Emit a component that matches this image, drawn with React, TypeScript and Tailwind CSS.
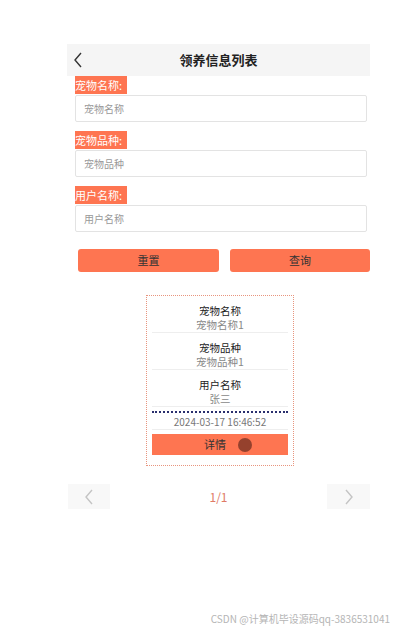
import React from "react";

type Field = {
  label: string;
  placeholder: string;
};

type Row = {
  title: string;
  value: string;
};

const fields: Field[] = [
  { label: "宠物名称:", placeholder: "宠物名称" },
  { label: "宠物品种:", placeholder: "宠物品种" },
  { label: "用户名称:", placeholder: "用户名称" },
];

const rows: Row[] = [
  { title: "宠物名称", value: "宠物名称1" },
  { title: "宠物品种", value: "宠物品种1" },
  { title: "用户名称", value: "张三" },
];

const Chevron = ({ dir, className }: { dir: "left" | "right"; className?: string }) => (
  <svg
    width="10"
    height="16"
    viewBox="0 0 10 16"
    fill="none"
    stroke="currentColor"
    strokeWidth="1.4"
    className={className}
  >
    {dir === "left" ? <path d="M8 1 L2 8 L8 15" /> : <path d="M2 1 L8 8 L2 15" />}
  </svg>
);

const App: React.FC = () => {
  return (
    <div
      className="relative w-[394px] h-[631px] bg-white overflow-hidden"
      style={{ fontFamily: '"Noto Sans CJK SC", "Noto Sans", sans-serif' }}
    >
      <div className="ml-[67px] w-[303px] pt-[44px]">
        {/* header */}
        <div className="relative h-[32px] bg-[#f5f5f5] flex items-center justify-center">
          <Chevron dir="left" className="absolute left-[6px] top-[8px] text-[#333]" />
          <span className="text-[13px] font-bold text-[#222]">领养信息列表</span>
        </div>

        {/* search form */}
        <div className="pl-[8px] pr-[3px] flex flex-col gap-[9px]">
          {fields.map((f) => (
            <div key={f.label} className="flex flex-col">
              <div className="w-[52px] h-[18px] bg-[#fe7551] text-white text-[11px] leading-[18px] whitespace-nowrap overflow-hidden">
                {f.label}
              </div>
              <div className="mt-[1px] h-[27px] border border-[#e3e3e3] rounded-[2px] flex items-center px-[8px] text-[10px] text-[#999]">
                {f.placeholder}
              </div>
            </div>
          ))}
        </div>

        <div className="mt-[17px] pl-[11px] flex gap-[11px]">
          <button className="w-[141px] h-[23px] rounded-[3px] bg-[#fe7551] text-[11px] text-[#333]">
            重置
          </button>
          <button className="w-[140px] h-[23px] rounded-[3px] bg-[#fe7551] text-[11px] text-[#333]">
            查询
          </button>
        </div>

        {/* card */}
        <div className="mt-[23px] ml-[79px] w-[148px] border border-dotted border-[#e8957e] px-[5px] pb-[10px]">
          {rows.map((r) => (
            <div key={r.title} className="h-[37px] pt-[8px] border-b border-[#eeeeee] text-center">
              <div className="text-[10.5px] leading-[14px] text-[#222]">{r.title}</div>
              <div className="text-[10.5px] leading-[14px] text-[#888]">{r.value}</div>
            </div>
          ))}
          <div className="mt-[4px] border-t-2 border-dotted border-[#2a2f6e]" />
          <div className="h-[17px] border-b border-[#eeeeee] text-center text-[10px] leading-[17px] text-[#777]">
            2024-03-17 16:46:52
          </div>
          <div className="relative mt-[4px] h-[21px] bg-[#fe7551] flex items-center justify-center text-[11px] text-[#333]">
            <span className="pr-[10px]">详情</span>
            <span className="absolute left-[86px] top-[4px] w-[14px] h-[14px] rounded-full bg-[#7a3424]/80" />
          </div>
        </div>

        {/* pagination */}
        <div className="mt-[18px] flex items-center justify-between pl-[1px]">
          <div className="w-[42px] h-[25px] bg-[#f8f8f8] flex items-center justify-center text-[#c4c4c4]">
            <Chevron dir="left" />
          </div>
          <span className="text-[12px] text-[#e07a66]">1/1</span>
          <div className="w-[43px] h-[25px] bg-[#f8f8f8] flex items-center justify-center text-[#c4c4c4]">
            <Chevron dir="right" />
          </div>
        </div>
      </div>

      <div className="absolute right-[4px] top-[611px] text-[10px] text-[#b5b5b5] whitespace-nowrap">
        CSDN @计算机毕设源码qq-3836531041
      </div>
    </div>
  );
};

export default App;
